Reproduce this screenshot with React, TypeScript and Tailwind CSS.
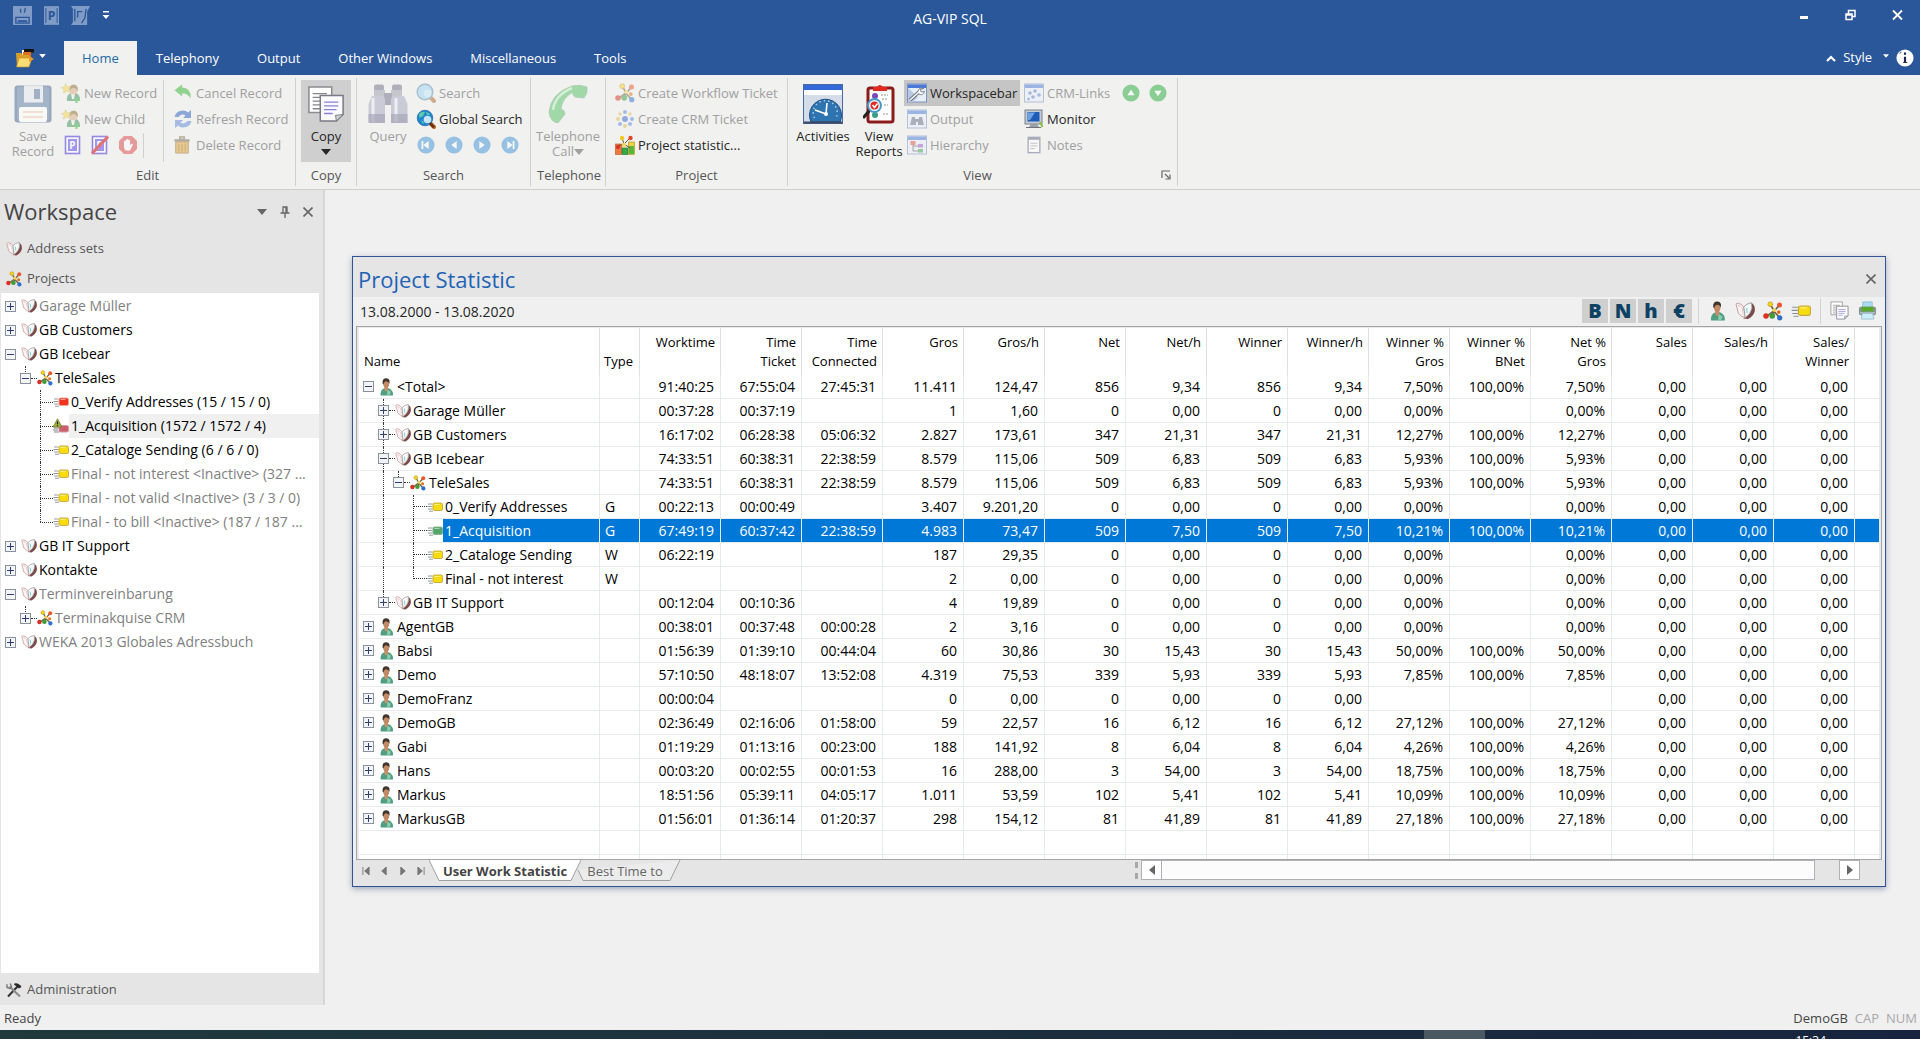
import React from 'react';
import clsx from 'clsx';

type IconProps = { className?: string };

/* ---------- small icons (16px grid) ---------- */

const BookIcon = ({ className = 'h-4 w-4' }: IconProps) => (
  <svg viewBox="0 0 16 16" className={className}>
    <path d="M13.2 1.4Q16.4 3.5 15.8 8.2Q14.8 12 10.4 14.4L6.6 14L11 10.5Q13.8 7 13.2 1.4Z" fill="#7a4a4a" />
    <path d="M0.8 2.4Q1 1.6 2.6 1.8Q5.6 2.4 7 4.8L8.2 13.4Q5 12.6 2.8 10Z" fill="#f6f4f4" stroke="#c98f8f" strokeWidth="0.7" />
    <path d="M2.2 3.4Q4.6 4 5.8 5.8L6.6 10.8" stroke="#e6bcbc" strokeWidth="0.7" fill="none" />
    <path d="M7 4.8Q9 2 13.2 1.4Q14.4 6 11.8 9.8Q10 12 8.2 13.4Z" fill="#f4fafb" stroke="#a09494" strokeWidth="0.7" />
    <path d="M9.4 5.6l0.3 4" stroke="#8fd8de" strokeWidth="1.1" />
  </svg>
);

const ProjectIcon = ({ className = 'h-4 w-4' }: IconProps) => (
  <svg viewBox="0 0 16 16" className={className}>
    <path d="M2.5 12.5L8.5 8L13.5 13.5M6 3L9 8L13 3.5M7.5 12L9 8" stroke="#6e6048" strokeWidth="1.3" fill="none" />
    <circle cx="5.8" cy="2.6" r="1.9" fill="#f2d51c" stroke="#b98f10" strokeWidth="0.5" />
    <circle cx="13.2" cy="3.2" r="2" fill="#e8562c" />
    <circle cx="2.4" cy="12" r="2.2" fill="#d93120" />
    <circle cx="7.4" cy="11.8" r="2.3" fill="#3f9d3a" />
    <circle cx="13.4" cy="13.4" r="2.1" fill="#2f6fd0" />
    <circle cx="12.6" cy="8.8" r="1.5" fill="#e07018" />
    <circle cx="9" cy="7.2" r="1.5" fill="#f6d24a" />
  </svg>
);

const UserIcon = ({ className = 'h-4 w-4' }: IconProps) => (
  <svg viewBox="0 0 16 16" className={className}>
    <path d="M3.2 15.5Q2.8 10.5 6.5 9.2L10.5 9Q14.8 11 14.2 15.5Z" fill="#4f9f80" />
    <path d="M9 10L12.5 12.5L11 15.5H9Z" fill="#8ccbb0" />
    <path d="M6.5 7.5H9.8L9.6 11L8 12L6.6 10.5Z" fill="#c98e68" />
    <ellipse cx="8.2" cy="5" rx="2.6" ry="3.6" fill="#c48a66" />
    <path d="M5 5Q4.4 0.3 8.4 0.3Q12 0.5 11 5.2Q10.4 3 8.5 3Q6.2 2.8 5.8 6Z" fill="#40342b" />
  </svg>
);

type TicketColor = 'yellow' | 'red' | 'green';
const ticketFill: Record<TicketColor, [string, string]> = {
  yellow: ['#f8dc10', '#c2a838'],
  red: ['#ee3420', '#f0a090'],
  green: ['#55a56c', '#7fb68c'],
};

const TicketIcon = ({ color = 'yellow', className = 'h-4 w-4' }: IconProps & { color?: TicketColor }) => (
  <svg viewBox="0 0 16 16" className={className}>
    <path d="M1 5h4.5M0.5 7.5h5M1 10h4.5M2 12.2h4" stroke="#8a8e94" strokeWidth="0.9" />
    <rect x="6" y="4" width="9.5" height="7.5" rx="1.5" fill={ticketFill[color][0]} stroke={ticketFill[color][1]} strokeWidth="0.9" />
    <path d="M7.5 5.5h5" stroke="#fff" strokeOpacity="0.5" />
  </svg>
);

const WarningTicketIcon = ({ className = 'h-4 w-4' }: IconProps) => (
  <svg viewBox="0 0 16 16" className={className}>
    <path d="M1 10h5M0 12h5M1 14h5" stroke="#7c8087" strokeWidth="1" />
    <rect x="6" y="7.5" width="9.5" height="6.5" rx="1.5" fill="#c9606c" stroke="#d99aa2" />
    <path d="M4.5 0.8L9 9H0Z" fill="#a3ad3c" stroke="#6f7a2a" strokeWidth="0.7" />
    <path d="M4.5 3.5v2.8M4.5 7.2v1" stroke="#222" strokeWidth="1.2" />
  </svg>
);

const CopyIcon = ({ className = 'h-5 w-5' }: IconProps) => (
  <svg viewBox="0 0 40 40" className={className}>
    <path d="M2 2H26V29H2Z" fill="#fff" stroke="#8b8b90" strokeWidth="1.6" />
    <path d="M6 9h15M6 13h9M6 17h8M6 21h8M6 25h8" stroke="#85858a" strokeWidth="1.4" />
    <path d="M14 11H38V31L31 38H14Z" fill="#fbfbff" stroke="#7a7a82" strokeWidth="1.6" />
    <path d="M38 31L30 32L31 38Z" fill="#cfcfd6" stroke="#7a7a82" />
    <path d="M18 18h15M18 22h15M18 26h13M18 30h9" stroke="#8a80d8" strokeWidth="1.4" />
  </svg>
);

const PrinterIcon = ({ className = 'h-5 w-5' }: IconProps) => (
  <svg viewBox="0 0 20 20" className={className}>
    <path d="M5 1h10v6H5z" fill="#a9dcf4" stroke="#86b7cf" strokeWidth="0.8" />
    <rect x="1" y="6" width="18" height="9" rx="2" fill="#8b9298" />
    <rect x="3.5" y="6" width="13" height="5" fill="#5aa82e" />
    <path d="M2 12.5h16" stroke="#cdd2d6" />
    <path d="M4.5 13h11l1 6h-13z" fill="#cdeefb" stroke="#8fb9cc" strokeWidth="0.8" />
  </svg>
);

const ToolsIcon = ({ className = 'h-4 w-4' }: IconProps) => (
  <svg viewBox="0 0 16 16" className={className}>
    <path d="M2 14.5L12 4" stroke="#333" strokeWidth="2" />
    <path d="M8.5 1.5Q12.5 0.5 15.5 5L13 6.5L8 2.5Z" fill="#2a2a2a" />
    <path d="M3.5 4.5L14 14.5" stroke="#8b8b8b" strokeWidth="2.2" />
    <path d="M1 2.2L1 5.5L4 6.5L5.5 4.8L4.2 1.5" fill="none" stroke="#777" strokeWidth="1.4" />
  </svg>
);

/* ---------- ribbon icons ---------- */

const FloppyIcon = ({ className }: IconProps) => (
  <svg viewBox="0 0 38 38" className={className}>
    <rect x="0.5" y="0.5" width="37" height="37" rx="3" fill="#41608a" />
    <rect x="3" y="2" width="32" height="33" rx="2" fill="#5a7ba6" />
    <rect x="10" y="0.5" width="19" height="17" fill="#e6e9f0" />
    <rect x="20" y="4" width="6" height="10" fill="#54719b" />
    <rect x="5" y="22" width="28" height="15" rx="2" fill="#fff" />
    <path d="M9 27h20M9 32h20" stroke="#e2a070" strokeWidth="1.2" />
  </svg>
);

const NewUserIcon = ({ className }: IconProps) => (
  <svg viewBox="0 0 20 20" className={className}>
    <path d="M6 18Q5 12 10 10H15Q19.5 12 19 18Z" fill="#3f8f5e" />
    <path d="M10 11h4l-1 5h-2z" fill="#f4f4ee" />
    <ellipse cx="12.5" cy="7" rx="3.8" ry="4.5" fill="#d6ab80" />
    <path d="M8.5 8Q7.5 1.5 13 1.5Q18 2 16.6 9Q15.5 5 13 5Q10 4.5 8.5 8Z" fill="#8a7030" />
    <path d="M4.5 0.5L6 3.8L9.5 3.5L7.4 6.2L8.8 9.5L5.5 8L2.6 10.2L3 6.6L0.3 4.5L3.7 3.9Z" fill="#f6d84a" stroke="#c9a420" strokeWidth="0.5" />
    <path d="M12 17h7M15.5 14v6" stroke="#2faa3a" strokeWidth="2" />
  </svg>
);

const ProtocolIcon = ({ className, crossed }: IconProps & { crossed?: boolean }) => (
  <svg viewBox="0 0 18 20" className={className}>
    <rect x="1.5" y="1.5" width="14" height="17" fill="#fff" stroke="#5a45e0" strokeWidth="1.6" />
    <rect x="4" y="4" width="9" height="12" fill="#6a5ae8" />
    <text x="8.5" y="14" textAnchor="middle" fontFamily="Open Sans" fontWeight="700" fontSize="10" fill="#fff">P</text>
    {crossed && <path d="M1 18.5L17 1.5" stroke="#d82020" strokeWidth="3" />}
  </svg>
);

const StopIcon = ({ className }: IconProps) => (
  <svg viewBox="0 0 20 20" className={className}>
    <path d="M6 1H14L19 6V14L14 19H6L1 14V6Z" fill="#d81818" />
    <path d="M6 10V6Q7 5 8 6V4.5Q9 3.5 10 4.5V5Q11.3 4 12 5.5V10L14 8.5Q15.4 9 14.5 10.5L12 15.5H7.5L6 13Z" fill="#fff" />
  </svg>
);

const UndoIcon = ({ className }: IconProps) => (
  <svg viewBox="0 0 20 20" className={className}>
    <path d="M0.5 7L9 0.5V4Q19 4 18.5 16Q15 10 9 10.5V14Z" fill="#35b435" />
  </svg>
);

const RefreshIcon = ({ className }: IconProps) => (
  <svg viewBox="0 0 20 20" className={className}>
    <path d="M1.5 8Q3 1.5 10 1.5Q13 1.5 15 3.5L18 1V9H10L12.5 6.5Q9 4 5.5 8Z" fill="#2d5fc4" />
    <path d="M18.5 12Q17 18.5 10 18.5Q7 18.5 5 16.5L2 19V11H10L7.5 13.5Q11 16 14.5 12Z" fill="#5e86d6" />
  </svg>
);

const TrashIcon = ({ className }: IconProps) => (
  <svg viewBox="0 0 20 20" className={className}>
    <path d="M7.5 1h5v2.5h-5z" fill="none" stroke="#6d5a2a" strokeWidth="1.4" />
    <rect x="1.5" y="3.5" width="17" height="3" rx="1" fill="#6e6a5a" />
    <path d="M3 6.5H17V19H3Z" fill="#e0a030" stroke="#8c671c" />
    <path d="M6.5 9v8M10 9v8M13.5 9v8" stroke="#a9761c" strokeWidth="1.3" />
  </svg>
);

const BinocularsIcon = ({ className }: IconProps) => (
  <svg viewBox="0 0 40 40" className={className}>
    <rect x="6" y="0.5" width="10" height="6" rx="2" fill="#6f6f88" />
    <rect x="24" y="0.5" width="10" height="6" rx="2" fill="#6f6f88" />
    <path d="M6 6H17V18H6ZM23 6H34V18H23Z" fill="#9a9aae" />
    <path d="M16 9h8v12h-8z" fill="#70708a" />
    <path d="M3 14Q3 12 6 12H15Q17 13 17 16V39H0.5V20Z" fill="#a6a6c0" />
    <path d="M37 14Q37 12 34 12H25Q23 13 23 16V39H39.5V20Z" fill="#a6a6c0" />
    <path d="M5 14V38M28 14V38" stroke="#ececf4" strokeWidth="3" />
    <path d="M0.5 30H17V39H0.5ZM23 30H39.5V39H23Z" fill="#5e5e80" fillOpacity="0.7" />
  </svg>
);

const SearchIcon = ({ className, globe }: IconProps & { globe?: boolean }) => (
  <svg viewBox="0 0 20 20" className={className}>
    <path d="M13.5 13.5L18 18" stroke="#b1692c" strokeWidth="4" strokeLinecap="round" />
    <circle
      cx="9"
      cy="9"
      r="7.8"
      fill={globe ? '#1f86cc' : '#9fd4f4'}
      stroke={globe ? '#2a70a8' : '#5f8fae'}
      strokeWidth={globe ? '0.8' : '1.4'}
    />
    {globe && <path d="M3 5Q6 2 9 3L7 7L3.5 9ZM10 3Q13 3.5 14 6L11 6ZM5 11L8 13L7 15Z" fill="#5ccbb0" />}
    <circle cx="11.5" cy="10.5" r="3.8" fill="#e6f6ff" fillOpacity={globe ? '0.85' : '0.6'} />
    {globe && <path d="M14 14L18 18.5" stroke="#6b2f12" strokeWidth="2.6" />}
  </svg>
);

const NavCircle = ({ kind }: { kind: 'first' | 'prev' | 'next' | 'last' }) => (
  <svg viewBox="0 0 20 20" className="h-[18px] w-[18px] opacity-50">
    <circle cx="10" cy="10" r="9.5" fill="#3d93d8" />
    {kind === 'first' && <path d="M6 5.5v9" stroke="#fff" strokeWidth="2" />}
    {kind === 'last' && <path d="M14 5.5v9" stroke="#fff" strokeWidth="2" />}
    {kind === 'first' || kind === 'prev' ? (
      <path d="M13 5.5v9L7 10z" fill="#fff" />
    ) : (
      <path d="M7 5.5v9l6-4.5z" fill="#fff" />
    )}
  </svg>
);

const GreenCircle = ({ up }: { up?: boolean }) => (
  <svg viewBox="0 0 20 20" className="h-[18px] w-[18px] opacity-60">
    <circle cx="10" cy="10" r="9.5" fill="#48b858" />
    <path d={up ? 'M10 6.5l4 6h-8z' : 'M10 13.5l4-6h-8z'} fill="#fff" />
  </svg>
);

const PhoneIcon = ({ className }: IconProps) => (
  <svg viewBox="0 0 42 40" className={className}>
    <path d="M25 2Q33 0 40 3Q41 9 37 14L28 13Q25 11 26 8Q15 14 14 25Q18 26 18 30L11 39Q3 38 2 28Q4 9 25 2Z" fill="#52c060" stroke="#6fa878" strokeWidth="0.8" />
    <path d="M6 26Q8 11 25 4" stroke="#b8ecc0" strokeWidth="2.5" fill="none" />
  </svg>
);

const CrmDotsIcon = ({ className }: IconProps) => (
  <svg viewBox="0 0 20 20" className={className}>
    <g fill="#5a86e0">
      <circle cx="10" cy="3" r="2" />
      <circle cx="17" cy="10" r="2" />
      <circle cx="5" cy="15" r="2" />
      <circle cx="15" cy="15" r="2" />
    </g>
    <g fill="#e8b850">
      <circle cx="3" cy="10" r="2" />
      <circle cx="5" cy="5" r="1.7" />
      <circle cx="15" cy="5" r="1.7" />
      <circle cx="10" cy="17" r="2" />
    </g>
    <circle cx="10" cy="10" r="3" fill="#3868d0" />
  </svg>
);

const StatisticIcon = ({ className }: IconProps) => (
  <svg viewBox="0 0 20 20" className={className}>
    <rect x="0.5" y="9" width="6" height="10.5" fill="#f07840" stroke="#b85020" strokeWidth="0.6" />
    <rect x="7" y="13" width="6" height="6.5" fill="#38a848" stroke="#1c7028" strokeWidth="0.6" />
    <rect x="13.5" y="7" width="6" height="12.5" fill="#f0d040" stroke="#a88c18" strokeWidth="0.6" />
    <rect x="14" y="11" width="5" height="8" fill="#58b838" />
    <path d="M3 11L9 9L15 3M9 9L7 3M9 9L15 13" stroke="#6a5a30" strokeWidth="1" fill="none" />
    <circle cx="7" cy="3" r="2.2" fill="#f2c81c" />
    <circle cx="15.5" cy="3" r="2.2" fill="#e04828" />
    <circle cx="9" cy="10" r="2.2" fill="#f0d860" />
    <circle cx="3" cy="12" r="2" fill="#d93120" />
  </svg>
);

const ActivitiesIcon = ({ className }: IconProps) => (
  <svg viewBox="0 0 40 40" className={className}>
    <rect x="0.5" y="0.5" width="39" height="39" fill="#d4dcea" stroke="#4a68a8" />
    <rect x="1" y="1" width="38" height="5" fill="#3468d8" />
    <rect x="1" y="6" width="38" height="5" fill="#fff" />
    <path d="M8 38A16 16 0 1 1 37 38Z" fill="#2d74b0" stroke="#1f4f7e" />
    <path d="M11.5 34A12 12 0 1 1 33 34" fill="none" stroke="#a8cce8" strokeWidth="1.5" strokeDasharray="1.5 3" />
    <path d="M23 30L12 26M23 30L24 19" stroke="#fff" strokeWidth="1.6" />
    <circle cx="23" cy="30" r="2" fill="#fff" />
    <path d="M1 38.5h38" stroke="#3a4a62" strokeWidth="2" />
  </svg>
);

const ReportsIcon = ({ className }: IconProps) => (
  <svg viewBox="0 0 32 40" className={className}>
    <rect x="5" y="4" width="25" height="34" rx="2" fill="#fff" stroke="#8c1a18" strokeWidth="3" />
    <path d="M10 3h4q2.5-4 6 0h4v4H10z" fill="#e02a20" />
    <circle cx="12" cy="12" r="3" fill="#7a48b8" />
    <path d="M18 11h7M19 15h6M21 21h4M20 30h6" stroke="#b8b8b8" strokeWidth="1.5" strokeDasharray="2 1" />
    <circle cx="12" cy="31" r="3" fill="#38a080" />
    <path d="M6 27L1 33" stroke="#222" strokeWidth="3" strokeLinecap="round" />
    <circle cx="11.5" cy="21.5" r="6.5" fill="#e8f4fc" stroke="#4a98c8" strokeWidth="2" />
    <circle cx="11.5" cy="21.5" r="4" fill="#e02a20" />
    <path d="M9.5 21l2 2.5 3-4" stroke="#fff" strokeWidth="1.5" fill="none" />
  </svg>
);

const WindowBase = () => (
  <>
    <rect x="0.5" y="1" width="19" height="18" fill="#e8eef8" stroke="#7a92c0" />
    <rect x="1" y="1.5" width="18" height="3.5" fill="#4a78d8" />
  </>
);

const WorkspacebarIcon = ({ className }: IconProps) => (
  <svg viewBox="0 0 20 20" className={className}>
    <WindowBase />
    <path d="M1 19V5L11 14L6 19Z" fill="#b8c8e4" />
    <path d="M3 17L12 9" stroke="#6a6f78" strokeWidth="3.4" />
    <path d="M17 5.5L13.5 6L14 9L17.5 8.5Q16.5 12.5 12.5 11.5Q9.5 9 12 6Q14 4 17 5.5Z" fill="#fff" stroke="#6a6f78" strokeWidth="0.8" />
    <path d="M3 17L12 9" stroke="#f4f6fa" strokeWidth="1.6" />
  </svg>
);

const OutputIcon = ({ className }: IconProps) => (
  <svg viewBox="0 0 20 20" className={className}>
    <WindowBase />
    <path d="M5 8h3v2h4V8h3l2 8h-6v-3H9v3H3z" fill="#687088" />
  </svg>
);

const HierarchyIcon = ({ className }: IconProps) => (
  <svg viewBox="0 0 20 20" className={className}>
    <WindowBase />
    <path d="M6 8v8h6M6 11h6" stroke="#555" fill="none" />
    <rect x="3.5" y="6" width="5" height="4" fill="#e05040" />
    <rect x="11" y="9" width="5" height="3.5" fill="#a058c0" />
    <rect x="11" y="14" width="5" height="3.5" fill="#40a050" />
  </svg>
);

const CrmLinksIcon = ({ className }: IconProps) => (
  <svg viewBox="0 0 20 20" className={className}>
    <WindowBase />
    <g fill="#5a80c8">
      <circle cx="6" cy="10" r="1.8" />
      <circle cx="11" cy="8" r="1.8" />
      <circle cx="15" cy="12" r="1.8" />
      <circle cx="9" cy="14" r="1.8" />
      <circle cx="4.5" cy="16" r="1.3" />
    </g>
  </svg>
);

const MonitorIcon = ({ className }: IconProps) => (
  <svg viewBox="0 0 20 20" className={className}>
    <rect x="1" y="1" width="17" height="14" fill="#c6ccd6" stroke="#7a8088" />
    <rect x="3.5" y="3" width="12" height="9.5" fill="#1d5cb8" />
    <path d="M4 3.5h7L6 11H4z" fill="#6fa4e4" />
    <path d="M7 15h6l2 3H5z" fill="#9aa0a8" />
    <path d="M16 13l2.5 5" stroke="#8cc040" strokeWidth="2" />
    <path d="M2 18.5h15" stroke="#6e747c" />
  </svg>
);

const NotesIcon = ({ className }: IconProps) => (
  <svg viewBox="0 0 20 20" className={className}>
    <rect x="3.5" y="1.5" width="13" height="17" fill="#fff" stroke="#66688a" strokeWidth="1.5" />
    <path d="M3.5 3h13" stroke="#66688a" strokeWidth="2.5" />
    <path d="M6 8h8M6 11h8M6 14h5" stroke="#88889a" />
  </svg>
);

const FolderIcon = ({ className }: IconProps) => (
  <svg viewBox="0 0 20 20" className={className}>
    <path d="M7 2h4v5H7z" fill="#fff" />
    <path d="M9 1h10v3.5H9z" fill="#141414" />
    <path d="M8 4h8v8H8z" fill="#e0701c" />
    <path d="M1 5h5l1.5 2H14v12H2z" fill="#d8a028" />
    <path d="M4 10h13l-3 9H1.5z" fill="#fcdc74" stroke="#c08a20" strokeWidth="0.6" />
    <path d="M14 8l5 3-5 3z" fill="#f09a20" />
  </svg>
);

/* ---------- ribbon building blocks ---------- */

const Caret = ({ className = 'h-[6px] w-[10px]' }: IconProps) => (
  <svg viewBox="0 0 10 6" className={clsx('fill-current', className)}>
    <path d="M0 0h10L5 6z" />
  </svg>
);

interface SmallButtonProps {
  icon: React.ReactNode;
  label: string;
  disabled?: boolean;
  active?: boolean;
}

const SmallButton = ({ icon, label, disabled, active }: SmallButtonProps) => (
  <button
    type="button"
    disabled={disabled}
    className={clsx(
      'flex h-[26px] items-center gap-[3px] px-[3px] whitespace-nowrap',
      disabled ? 'text-[#a0a0a0]' : 'text-[#262626]',
      active && 'bg-[#c5c5c5]',
    )}
  >
    <span className={clsx('flex h-5 w-5 items-center', disabled && 'opacity-50')}>{icon}</span>
    <span className="pt-px">{label}</span>
  </button>
);

interface LargeButtonProps {
  icon: React.ReactNode;
  lines: string[];
  disabled?: boolean;
  active?: boolean;
  caret?: 'below' | 'inline';
  className?: string;
}

const LargeButton = ({ icon, lines, disabled, active, caret, className }: LargeButtonProps) => (
  <button
    type="button"
    disabled={disabled}
    className={clsx(
      'flex h-[82px] flex-col items-center pt-[4px] leading-[15px]',
      disabled ? 'text-[#a0a0a0]' : 'text-[#262626]',
      active && 'bg-[#cfcfcf]',
      className,
    )}
  >
    <span className={clsx('mb-[6px] flex h-[39px] items-center', disabled && 'opacity-50')}>{icon}</span>
    {lines.map((line, i) => (
      <span key={line} className="flex items-center whitespace-nowrap">
        {line}
        {caret === 'inline' && i === lines.length - 1 && <Caret />}
      </span>
    ))}
    {caret === 'below' && <Caret className="mt-[5px] h-[6px] w-[10px]" />}
  </button>
);

interface GroupProps {
  label: string;
  className?: string;
  launcher?: boolean;
  children: React.ReactNode;
}

const Group = ({ label, className, launcher, children }: GroupProps) => (
  <section className={clsx('my-[3px] flex flex-col border-r border-[#d0d0d0]', className)}>
    <div className="flex h-[84px] pt-[2px]">{children}</div>
    <div className="flex items-center pt-[2px] pr-[6px] text-[#555]">
      <span className="flex-1 pl-[6px] text-center leading-[22px] whitespace-nowrap">{label}</span>
      {launcher && (
        <button type="button" aria-label={`${label} options`}>
          <svg viewBox="0 0 10 10" className="h-[10px] w-[10px]" fill="none" stroke="#666" strokeWidth="1.2">
            <path d="M1 8V1h8M4 4l4 4M9 4.5V9H4.5" />
          </svg>
        </button>
      )}
    </div>
  </section>
);

/* ---------- trees ---------- */

const Expander = ({ open }: { open?: boolean }) => (
  <button
    type="button"
    aria-label={open ? 'Collapse' : 'Expand'}
    className="relative z-10 flex h-[11px] w-[11px] shrink-0 items-center justify-center border border-[#8a8f98] bg-[#f4f5f8]"
  >
    <svg viewBox="0 0 9 9" className="h-[9px] w-[9px]">
      <path d={open ? 'M1 4.5h7' : 'M1 4.5h7M4.5 1v7'} stroke="#2c3f78" />
    </svg>
  </button>
);

const HDots = ({ className }: IconProps) => (
  <span className={clsx('h-px shrink-0 border-t border-dotted border-[#333]', className)} />
);

interface SideNode {
  label: string;
  level: 0 | 1 | 2;
  open?: boolean;
  muted?: boolean;
  selected?: boolean;
  last?: boolean;
  icon?: 'red' | 'warn' | 'yellow';
}

const sideNodes: SideNode[] = [
  { label: 'Garage Müller', level: 0, muted: true },
  { label: 'GB Customers', level: 0 },
  { label: 'GB Icebear', level: 0, open: true },
  { label: 'TeleSales', level: 1, open: true },
  { label: '0_Verify Addresses (15 / 15 / 0)', level: 2, icon: 'red' },
  { label: '1_Acquisition (1572 / 1572 / 4)', level: 2, icon: 'warn', selected: true },
  { label: '2_Cataloge Sending (6 / 6 / 0)', level: 2, icon: 'yellow' },
  { label: 'Final - not interest <Inactive> (327 ...', level: 2, icon: 'yellow', muted: true },
  { label: 'Final - not valid <Inactive> (3 / 3 / 0)', level: 2, icon: 'yellow', muted: true },
  { label: 'Final - to bill <Inactive> (187 / 187 ...', level: 2, icon: 'yellow', muted: true, last: true },
  { label: 'GB IT Support', level: 0 },
  { label: 'Kontakte', level: 0 },
  { label: 'Terminvereinbarung', level: 0, open: true, muted: true },
  { label: 'Terminakquise CRM', level: 1, muted: true },
  { label: 'WEKA 2013 Globales Adressbuch', level: 0, muted: true },
];

const SideRow = ({ node }: { node: SideNode }) => {
  const { label, level, open, muted, selected, last, icon } = node;
  return (
    <li
      className={clsx(
        'relative flex h-6 items-center whitespace-nowrap',
        muted ? 'text-[#808080]' : 'text-black',
        level === 0 && 'pl-[4px]',
        level === 1 && 'pl-[19px]',
        level === 2 && 'pl-[39px]',
      )}
    >
      {level === 0 && (
        <>
          <Expander open={open} />
          <BookIcon className="mr-[2px] ml-[5px] h-4 w-4 shrink-0" />
        </>
      )}
      {level === 1 && (
        <>
          <span className="absolute top-0 left-[24px] h-3 border-l border-dotted border-[#333]" />
          <Expander open={open} />
          <HDots className="w-[6px]" />
          <ProjectIcon className="mr-[2px] h-4 w-4 shrink-0" />
        </>
      )}
      {level === 2 && (
        <>
          <span className={clsx('absolute top-0 left-[39px] border-l border-dotted border-[#333]', last ? 'h-3' : 'h-6')} />
          <HDots className="w-[13px]" />
          {icon === 'warn' ? (
            <WarningTicketIcon className="h-4 w-4 shrink-0" />
          ) : (
            <TicketIcon color={icon as TicketColor} className="h-4 w-4 shrink-0" />
          )}
        </>
      )}
      <span className={clsx('leading-6', level === 2 && 'pl-[2px]', selected && 'flex-1 bg-[#f0f0f0]')}>{label}</span>
    </li>
  );
};

/* ---------- statistic table ---------- */

const columns = [
  'Worktime', 'Time\nTicket', 'Time\nConnected', 'Gros', 'Gros/h', 'Net', 'Net/h', 'Winner', 'Winner/h',
  'Winner %\nGros', 'Winner %\nBNet', 'Net %\nGros', 'Sales', 'Sales/h', 'Sales/\nWinner',
];

type Kind = 'user' | 'book' | 'project' | 'ticket';

interface StatRow {
  name: string;
  kind: Kind;
  open?: boolean;
  last?: boolean;
  selected?: boolean;
  type?: string;
  values: string;
}

// values are listed in column order, separated by "|"
const rows: StatRow[] = [
  { name: '<Total>', kind: 'user', open: true, values: '91:40:25|67:55:04|27:45:31|11.411|124,47|856|9,34|856|9,34|7,50%|100,00%|7,50%|0,00|0,00|0,00' },
  { name: 'Garage Müller', kind: 'book', values: '00:37:28|00:37:19||1|1,60|0|0,00|0|0,00|0,00%||0,00%|0,00|0,00|0,00' },
  { name: 'GB Customers', kind: 'book', values: '16:17:02|06:28:38|05:06:32|2.827|173,61|347|21,31|347|21,31|12,27%|100,00%|12,27%|0,00|0,00|0,00' },
  { name: 'GB Icebear', kind: 'book', open: true, values: '74:33:51|60:38:31|22:38:59|8.579|115,06|509|6,83|509|6,83|5,93%|100,00%|5,93%|0,00|0,00|0,00' },
  { name: 'TeleSales', kind: 'project', open: true, values: '74:33:51|60:38:31|22:38:59|8.579|115,06|509|6,83|509|6,83|5,93%|100,00%|5,93%|0,00|0,00|0,00' },
  { name: '0_Verify Addresses', kind: 'ticket', type: 'G', values: '00:22:13|00:00:49||3.407|9.201,20|0|0,00|0|0,00|0,00%||0,00%|0,00|0,00|0,00' },
  { name: '1_Acquisition', kind: 'ticket', type: 'G', selected: true, values: '67:49:19|60:37:42|22:38:59|4.983|73,47|509|7,50|509|7,50|10,21%|100,00%|10,21%|0,00|0,00|0,00' },
  { name: '2_Cataloge Sending', kind: 'ticket', type: 'W', values: '06:22:19|||187|29,35|0|0,00|0|0,00|0,00%||0,00%|0,00|0,00|0,00' },
  { name: 'Final - not interest', kind: 'ticket', type: 'W', last: true, values: '|||2|0,00|0|0,00|0|0,00|0,00%||0,00%|0,00|0,00|0,00' },
  { name: 'GB IT Support', kind: 'book', last: true, values: '00:12:04|00:10:36||4|19,89|0|0,00|0|0,00|0,00%||0,00%|0,00|0,00|0,00' },
  { name: 'AgentGB', kind: 'user', values: '00:38:01|00:37:48|00:00:28|2|3,16|0|0,00|0|0,00|0,00%||0,00%|0,00|0,00|0,00' },
  { name: 'Babsi', kind: 'user', values: '01:56:39|01:39:10|00:44:04|60|30,86|30|15,43|30|15,43|50,00%|100,00%|50,00%|0,00|0,00|0,00' },
  { name: 'Demo', kind: 'user', values: '57:10:50|48:18:07|13:52:08|4.319|75,53|339|5,93|339|5,93|7,85%|100,00%|7,85%|0,00|0,00|0,00' },
  { name: 'DemoFranz', kind: 'user', values: '00:00:04|||0|0,00|0|0,00|0|0,00||||0,00|0,00|0,00' },
  { name: 'DemoGB', kind: 'user', values: '02:36:49|02:16:06|01:58:00|59|22,57|16|6,12|16|6,12|27,12%|100,00%|27,12%|0,00|0,00|0,00' },
  { name: 'Gabi', kind: 'user', values: '01:19:29|01:13:16|00:23:00|188|141,92|8|6,04|8|6,04|4,26%|100,00%|4,26%|0,00|0,00|0,00' },
  { name: 'Hans', kind: 'user', values: '00:03:20|00:02:55|00:01:53|16|288,00|3|54,00|3|54,00|18,75%|100,00%|18,75%|0,00|0,00|0,00' },
  { name: 'Markus', kind: 'user', values: '18:51:56|05:39:11|04:05:17|1.011|53,59|102|5,41|102|5,41|10,09%|100,00%|10,09%|0,00|0,00|0,00' },
  { name: 'MarkusGB', kind: 'user', values: '01:56:01|01:36:14|01:20:37|298|154,12|81|41,89|81|41,89|27,18%|100,00%|27,18%|0,00|0,00|0,00' },
];

const NameCell = ({ row }: { row: StatRow }) => {
  const { kind, open, last, selected, name } = row;
  return (
    <div
      className={clsx(
        'relative flex h-[23px] items-center',
        kind === 'user' && 'pl-[4px]',
        kind === 'book' && 'pl-[19px]',
        kind === 'project' && 'pl-[34px]',
        kind === 'ticket' && 'pl-[54px]',
      )}
    >
      {kind !== 'user' && (
        <span
          className={clsx(
            'absolute top-0 left-[24px] border-l border-dotted border-[#333]',
            kind === 'book' && last ? 'h-3' : 'h-6',
          )}
        />
      )}
      {kind === 'project' && <span className="absolute top-0 left-[39px] h-3 border-l border-dotted border-[#333]" />}
      {kind === 'ticket' && (
        <span className={clsx('absolute top-0 left-[54px] border-l border-dotted border-[#333]', last ? 'h-3' : 'h-6')} />
      )}
      {kind === 'ticket' ? <HDots className="w-[14px]" /> : <Expander open={open} />}
      {kind === 'user' && <UserIcon className="mr-[2px] ml-[3px] h-[18px] w-[18px] shrink-0" />}
      {kind === 'book' && (
        <>
          <HDots className="w-[6px]" />
          <BookIcon className="mr-[2px] h-4 w-4 shrink-0" />
        </>
      )}
      {kind === 'project' && (
        <>
          <HDots className="w-[6px]" />
          <ProjectIcon className="mr-[3px] h-4 w-4 shrink-0" />
        </>
      )}
      {kind === 'ticket' && <TicketIcon color={selected ? 'green' : 'yellow'} className="h-4 w-4 shrink-0" />}
      <span
        className={clsx('leading-[23px] whitespace-nowrap', kind === 'ticket' && 'pl-[2px]', selected && 'flex-1 bg-[#0078d7] text-white')}
      >
        {name}
      </span>
    </div>
  );
};

const StatTable = () => (
  <table className="w-full table-fixed border-separate border-spacing-0 bg-white text-[14px] text-black">
    <colgroup>
      <col className="w-[241px]" />
      <col className="w-[40px]" />
      {columns.map(c => (
        <col key={c} className="w-[81px]" />
      ))}
      <col />
    </colgroup>
    <thead>
      <tr className="h-[47px] text-[13px] leading-[19px]">
        <th className="border-r border-[#dde1e1] pb-[4px] pl-[5px] text-left align-bottom font-normal">Name</th>
        <th className="border-r border-[#dde1e1] pb-[4px] pl-[4px] text-left align-bottom font-normal">Type</th>
        {columns.map(c => (
          <th key={c} className="border-r border-[#dde1e1] pt-[5px] pr-[5px] text-right align-top font-normal whitespace-pre">
            {c}
          </th>
        ))}
        <th />
      </tr>
    </thead>
    <tbody>
      {rows.map(row => (
        <tr key={row.name} className="h-6 leading-[23px]">
          <td className="border-r border-b border-[#e6eaea] p-0">
            <NameCell row={row} />
          </td>
          <td className={clsx('border-r border-b border-[#e6eaea] p-0 pl-[5px]', row.selected && 'bg-[#0078d7] text-white')}>
            {row.type}
          </td>
          {row.values.split('|').map((value, i) => (
            <td
              key={columns[i]}
              className={clsx(
                'border-r border-b border-[#e6eaea] p-0 pr-[6px] text-right',
                row.selected && 'bg-[#0078d7] text-white',
              )}
            >
              {value}
            </td>
          ))}
          <td className={clsx('border-b border-[#e6eaea] p-0', row.selected && 'bg-[#0078d7]')} />
        </tr>
      ))}
      <tr className="h-6">
        {Array.from({ length: 18 }, (_, i) => (
          <td key={i} className={clsx('border-b border-[#e6eaea] p-0', i < 17 && 'border-r')} />
        ))}
      </tr>
      <tr className="h-1">
        {Array.from({ length: 18 }, (_, i) => (
          <td key={i} className={clsx('border-[#e6eaea] p-0', i < 17 && 'border-r')} />
        ))}
      </tr>
    </tbody>
  </table>
);

/* ---------- page parts ---------- */

const tabs = ['Home', 'Telephony', 'Output', 'Other Windows', 'Miscellaneous', 'Tools'];

const TitleBar = () => (
  <header className="bg-[#2a579a] text-white">
    <div className="grid h-[41px] grid-cols-[1fr_auto_1fr]">
      <div className="flex items-start gap-3 pt-[6px] pl-[13px]">
        <button type="button" aria-label="Save">
          <svg viewBox="0 0 20 20" className="h-[19px] w-[19px]">
            <path d="M0 0h20v20H0z" fill="#7f9bc6" />
            <path d="M8 3v4M13 2l-1 5M3 12h14v6H3z" stroke="#2a579a" strokeWidth="1.4" fill="none" />
            <path d="M5 16h10" stroke="#2a579a" strokeWidth="2" />
          </svg>
        </button>
        <button type="button" aria-label="Protocol">
          <svg viewBox="0 0 16 20" className="h-[19px] w-[15px]">
            <path d="M0 0h16v20H0z" fill="#7f9bc6" />
            <path d="M2 2v16M14 2v16" stroke="#2a579a" />
            <text x="8" y="15" textAnchor="middle" fontFamily="Open Sans" fontWeight="700" fontSize="13" fill="#2a579a">P</text>
          </svg>
        </button>
        <button type="button" aria-label="No protocol">
          <svg viewBox="0 0 20 20" className="h-[19px] w-[19px]">
            <path d="M0 0h20l-3 6v14H0l2-3V3z" fill="#7f9bc6" />
            <path d="M4 3v13M7 12V6h5M16 3L14.5 13L11 18" stroke="#2a579a" strokeWidth="1.4" fill="none" />
          </svg>
        </button>
        <button type="button" aria-label="Customize toolbar" className="pt-[5px]">
          <svg viewBox="0 0 8 9" className="h-[9px] w-[8px]">
            <path d="M1 0h6v1.5H1zM0.5 4h7L4 8z" fill="#fff" />
          </svg>
        </button>
      </div>
      <h1 className="pt-[8px] pr-[20px] text-[14px] leading-[22px]">AG-VIP SQL</h1>
      <div className="flex justify-end gap-9 pt-[9px] pr-[17px]">
        <button type="button" aria-label="Minimize" className="h-3 w-[10px]">
          <svg viewBox="0 0 10 12"><path d="M1 7h8v3H1z" fill="#fff" /></svg>
        </button>
        <button type="button" aria-label="Restore" className="h-3 w-[11px]">
          <svg viewBox="0 0 11 12" fill="none" stroke="#fff" strokeWidth="1.5">
            <path d="M1 5h6v5.5H1zM1 6h6M3.5 4.5V1.5h6.5v6H7.5" />
          </svg>
        </button>
        <button type="button" aria-label="Close" className="h-3 w-[11px]">
          <svg viewBox="0 0 11 12" stroke="#fff" strokeWidth="1.8"><path d="M1 1.5l9 9M10 1.5l-9 9" /></svg>
        </button>
      </div>
    </div>

    <div className="flex h-[34px]">
      <button type="button" aria-label="File menu" className="flex w-[64px] items-center gap-1 pl-[15px]">
        <FolderIcon className="h-5 w-5" />
        <Caret className="mb-1 h-[4px] w-[7px]" />
      </button>
      <nav className="flex">
        {tabs.map((tab, i) => (
          <button
            type="button"
            key={tab}
            className={clsx('pt-px whitespace-nowrap', i === 0 ? 'bg-[#f1f1f0] px-[18px] text-[#1d6aa8]' : 'px-[19px]')}
          >
            {tab}
          </button>
        ))}
      </nav>
      <div className="ml-auto flex items-center gap-[7px] pr-[6px]">
        <svg viewBox="0 0 10 7" className="h-[7px] w-[10px]">
          <path d="M1 6l4-4 4 4" fill="none" stroke="#fff" strokeWidth="2.2" />
        </svg>
        <button type="button" className="flex items-center gap-[11px]">
          Style
          <Caret className="mb-1 h-[4px] w-[6px]" />
        </button>
        <button type="button" aria-label="Info">
          <svg viewBox="0 0 20 20" className="h-[18px] w-[18px]">
            <circle cx="10" cy="10" r="9.5" fill="#fff" />
            <path d="M10 8.5V15M10 4v2.5" stroke="#14264a" strokeWidth="2.4" />
            <path d="M8 15h4.5M4 5l2-1.5" stroke="#14264a" />
          </svg>
        </button>
      </div>
    </div>
  </header>
);

const Ribbon = () => (
  <div className="flex h-[115px] border-b border-[#cfcfcf] bg-[#f1f1f0]">
    <Group label="Edit" className="w-[296px]">
      <LargeButton className="w-[66px]" disabled icon={<FloppyIcon className="h-[38px] w-[38px]" />} lines={['Save', 'Record']} />
      <div className="w-[98px] border-r border-[#d0d0d0]">
        <div className="-ml-[8px]">
          <SmallButton disabled icon={<NewUserIcon className="h-5 w-5" />} label="New Record" />
          <SmallButton disabled icon={<NewUserIcon className="h-5 w-5" />} label="New Child" />
        </div>
        <div className="-ml-[2px] flex h-[26px] items-center gap-[9px]">
          <button type="button" disabled aria-label="Protocol"><ProtocolIcon className="h-5 w-[18px] opacity-60" /></button>
          <button type="button" disabled aria-label="Cancel protocol"><ProtocolIcon crossed className="h-5 w-[18px] opacity-60" /></button>
          <button type="button" disabled aria-label="Stop"><StopIcon className="h-5 w-5 opacity-40" /></button>
          <span className="-ml-[4px] h-[25px] border-r border-[#d0d0d0]" />
        </div>
      </div>
      <div className="pl-[6px]">
        <SmallButton disabled icon={<UndoIcon className="h-[18px] w-5" />} label="Cancel Record" />
        <SmallButton disabled icon={<RefreshIcon className="h-5 w-5" />} label="Refresh Record" />
        <SmallButton disabled icon={<TrashIcon className="h-5 w-[18px]" />} label="Delete Record" />
      </div>
    </Group>

    <Group label="Copy" className="w-[61px]">
      <LargeButton className="mx-[5px] w-[50px]" active caret="below" icon={<CopyIcon className="h-[38px] w-[38px]" />} lines={['Copy']} />
    </Group>

    <Group label="Search" className="w-[174px]">
      <LargeButton className="w-[62px]" disabled icon={<BinocularsIcon className="h-[40px] w-[40px]" />} lines={['Query']} />
      <div className="-ml-[6px]">
        <SmallButton disabled icon={<SearchIcon className="h-5 w-5" />} label="Search" />
        <SmallButton icon={<SearchIcon globe className="h-5 w-5" />} label="Global Search" />
        <div className="flex h-[26px] items-center gap-[10px] pl-[4px]">
          <button type="button" disabled aria-label="First"><NavCircle kind="first" /></button>
          <button type="button" disabled aria-label="Previous"><NavCircle kind="prev" /></button>
          <button type="button" disabled aria-label="Next"><NavCircle kind="next" /></button>
          <button type="button" disabled aria-label="Last"><NavCircle kind="last" /></button>
        </div>
      </div>
    </Group>

    <Group label="Telephone" className="w-[75px]">
      <LargeButton className="w-full" disabled caret="inline" icon={<PhoneIcon className="h-[40px] w-[42px]" />} lines={['Telephone', 'Call']} />
    </Group>

    <Group label="Project" className="w-[182px]">
      <div className="pl-[6px]">
        <SmallButton disabled icon={<ProjectIcon className="h-5 w-5" />} label="Create Workflow Ticket" />
        <SmallButton disabled icon={<CrmDotsIcon className="h-5 w-5" />} label="Create CRM Ticket" />
        <SmallButton icon={<StatisticIcon className="h-5 w-5" />} label="Project statistic..." />
      </div>
    </Group>

    <Group label="View" launcher className="w-[390px]">
      <LargeButton className="w-[70px]" icon={<ActivitiesIcon className="h-[40px] w-[40px]" />} lines={['Activities']} />
      <LargeButton className="w-[42px]" icon={<ReportsIcon className="h-[40px] w-[32px]" />} lines={['View', 'Reports']} />
      <div className="ml-1 w-[117px]">
        <SmallButton active icon={<WorkspacebarIcon className="h-5 w-5" />} label="Workspacebar" />
        <SmallButton disabled icon={<OutputIcon className="h-5 w-5" />} label="Output" />
        <SmallButton disabled icon={<HierarchyIcon className="h-5 w-5" />} label="Hierarchy" />
      </div>
      <div>
        <SmallButton disabled icon={<CrmLinksIcon className="h-5 w-5" />} label="CRM-Links" />
        <SmallButton icon={<MonitorIcon className="h-5 w-5" />} label="Monitor" />
        <SmallButton disabled icon={<NotesIcon className="h-[18px] w-5" />} label="Notes" />
      </div>
      <div className="flex h-[26px] items-center gap-[9px] pl-[9px]">
        <button type="button" disabled aria-label="Up"><GreenCircle up /></button>
        <button type="button" disabled aria-label="Down"><GreenCircle /></button>
      </div>
    </Group>
  </div>
);

const Sidebar = () => (
  <aside className="flex w-[325px] shrink-0 flex-col border-r-2 border-[#d6d6d6] bg-[#e5e5e5] text-[#555]">
    <div className="flex h-[43px] items-center justify-between pr-[10px] pl-[4px]">
      <h2 className="text-[22px] text-[#444]">Workspace</h2>
      <div className="flex items-center gap-[13px] text-[#666]">
        <button type="button" aria-label="Menu"><Caret /></button>
        <button type="button" aria-label="Pin">
          <svg viewBox="0 0 10 12" className="h-3 w-[10px]" fill="none" stroke="currentColor" strokeWidth="1.3">
            <path d="M2.5 1h5M3 1v6M7 1v6M6 1v6M0.5 7h9M5 7v5" />
          </svg>
        </button>
        <button type="button" aria-label="Close">
          <svg viewBox="0 0 10 10" className="h-[10px] w-[10px]" stroke="currentColor" strokeWidth="1.6">
            <path d="M0.5 0.5l9 9M9.5 0.5l-9 9" />
          </svg>
        </button>
      </div>
    </div>
    <button type="button" className="flex h-[30px] items-center gap-[5px] pt-px pl-[6px]">
      <BookIcon /> Address sets
    </button>
    <button type="button" className="flex h-[30px] items-center gap-[5px] pt-px pl-[6px]">
      <ProjectIcon /> Projects
    </button>
    <ul className="mr-[4px] ml-px flex-1 overflow-hidden bg-white pt-px text-[14px]">
      {sideNodes.map(node => (
        <SideRow key={node.label} node={node} />
      ))}
    </ul>
    <button type="button" className="flex h-[32px] items-center gap-[5px] pt-px pl-[6px]">
      <ToolsIcon /> Administration
    </button>
  </aside>
);

const toggles = ['B', 'N', 'h', '€'];

const StatPanel = () => (
  <section className="border border-[#2f5394] bg-[#f0f0f0] shadow-[0_2px_6px_rgba(60,80,120,0.45)]">
    <div className="flex h-[40px] items-center justify-between bg-[#e5e5e5] pr-[9px] pl-[5px]">
      <h2 className="pt-[4px] text-[22px] text-[#1f63b5]">Project Statistic</h2>
      <button type="button" aria-label="Close" className="pt-[3px]">
        <svg viewBox="0 0 10 10" className="h-[10px] w-[10px]" stroke="#666" strokeWidth="1.6">
          <path d="M0.5 0.5l9 9M9.5 0.5l-9 9" />
        </svg>
      </button>
    </div>

    <div className="flex h-[29px] items-center justify-between pr-[8px] pb-[2px] pl-[7px]">
      <span className="pt-px text-[14px] text-[#262626]">13.08.2000 - 13.08.2020</span>
      <div className="flex items-center gap-[2px]">
        {toggles.map(t => (
          <button
            type="button"
            key={t}
            className="h-6 w-[26px] bg-[#cfcfcf] text-[20px] leading-6 font-extrabold text-[#0d4264]"
          >
            {t}
          </button>
        ))}
        <span className="ml-[4px] h-[26px] border-r border-[#d4d4d4]" />
        <button type="button" aria-label="Users" className="flex w-[26px] justify-end"><UserIcon className="h-5 w-5" /></button>
        <button type="button" aria-label="Address sets" className="flex w-[26px] justify-end"><BookIcon className="h-5 w-5" /></button>
        <button type="button" aria-label="Projects" className="flex w-[26px] justify-end"><ProjectIcon className="h-5 w-5" /></button>
        <button type="button" aria-label="Tickets" className="flex w-[26px] justify-end"><TicketIcon className="h-5 w-5" /></button>
        <span className="ml-[7px] h-[26px] border-r border-[#d4d4d4]" />
        <button type="button" aria-label="Copy" className="flex w-[26px] justify-end"><CopyIcon className="h-[19px] w-[19px]" /></button>
        <button type="button" aria-label="Print" className="flex w-[26px] justify-end"><PrinterIcon className="h-[19px] w-[19px]" /></button>
      </div>
    </div>

    <div className="mr-[3px] ml-[3px] border border-[#a2a4a6] bg-white">
      <div className="border-t border-r-[2px] border-l-[2px] border-[#e9e9e9]">
        <StatTable />
      </div>
    </div>

    <div className="flex h-[26px] items-start bg-[#e5e5e5] pl-[9px]">
      <div className="flex h-[21px] w-[63px] items-center justify-between">
        {['M1 0v9M8 0v9L3 4.5z', 'M7 0v9L2 4.5z', 'M2 0v9l5-4.5z', 'M8 0v9M1 0v9l5-4.5z'].map((d, i) => (
          <button type="button" key={d} aria-label={['First', 'Previous', 'Next', 'Last'][i]}>
            <svg viewBox="0 0 9 9" className="h-[8px] w-[8px]" fill="#777" stroke="#777"><path d={d} /></svg>
          </button>
        ))}
      </div>
      <button type="button" className="relative ml-1 h-[21px] w-[152px] leading-[18px] font-bold text-[#444]">
        <svg viewBox="0 0 152 21" preserveAspectRatio="none" className="absolute inset-0 h-full w-full">
          <path d="M0 0L10 20.5H142L152 0" fill="#fff" stroke="#a0a0a0" />
        </svg>
        <span className="relative whitespace-nowrap">User Work Statistic</span>
      </button>
      <button type="button" className="relative -ml-[4px] h-[21px] w-[104px] leading-[18px] text-[#666]">
        <svg viewBox="0 0 104 21" preserveAspectRatio="none" className="absolute inset-0 h-full w-full">
          <path d="M1 10L6 20.5H93L103 0" fill="#ececec" stroke="#a0a0a0" />
        </svg>
        <span className="relative pr-[8px] whitespace-nowrap">Best Time to</span>
      </button>
      <div className="ml-auto flex h-5 w-[750px] items-center pr-[25px]">
        <span className="mr-[3px] h-[17px] border-r-[3px] border-dashed border-[#a8a8a8]" />
        <button type="button" aria-label="Scroll left" className="flex h-5 w-[21px] items-center justify-center border border-[#b0b0b4] bg-white">
          <svg viewBox="0 0 6 10" className="h-[10px] w-[6px] fill-[#666]"><path d="M6 0v10L0 5z" /></svg>
        </button>
        <div className="-ml-px flex h-5 flex-1">
          <span className="mr-[24px] flex-1 border border-[#b0b0b4] bg-[#fcfcfc]" />
        </div>
        <button type="button" aria-label="Scroll right" className="flex h-5 w-[21px] items-center justify-center border border-[#b0b0b4] bg-white">
          <svg viewBox="0 0 6 10" className="h-[10px] w-[6px] fill-[#666]"><path d="M0 0v10l6-5z" /></svg>
        </button>
      </div>
    </div>
  </section>
);

const App = () => (
  <div className="flex h-screen flex-col overflow-hidden bg-[#f0f0f0] font-['Open_Sans',sans-serif] text-[13px]">
    <TitleBar />
    <Ribbon />
    <div className="flex min-h-0 flex-1">
      <Sidebar />
      <main className="min-w-0 flex-1 pt-[66px] pr-[34px] pl-[27px]">
        <StatPanel />
      </main>
    </div>
    <footer className="flex h-[25px] shrink-0 items-center pt-[2px] pr-[3px] pl-[4px] text-[#444]">
      <span>Ready</span>
      <div className="ml-auto flex gap-[7px] text-[#a8a8a8]">
        <span className="text-[#444]">DemoGB</span>
        <span>CAP</span>
        <span>NUM</span>
      </div>
    </footer>
    {/* top edge of the system taskbar */}
    <div className="flex h-[9px] shrink-0 justify-end overflow-hidden bg-linear-to-r from-[#1f393c] to-[#18243f]">
      <span className="mr-[310px] w-[61px] bg-[#4a5862]" />
      <span className="mr-[94px] pt-[5px] text-[12px] leading-[12px] text-white">15:34</span>
    </div>
  </div>
);

export default App;
